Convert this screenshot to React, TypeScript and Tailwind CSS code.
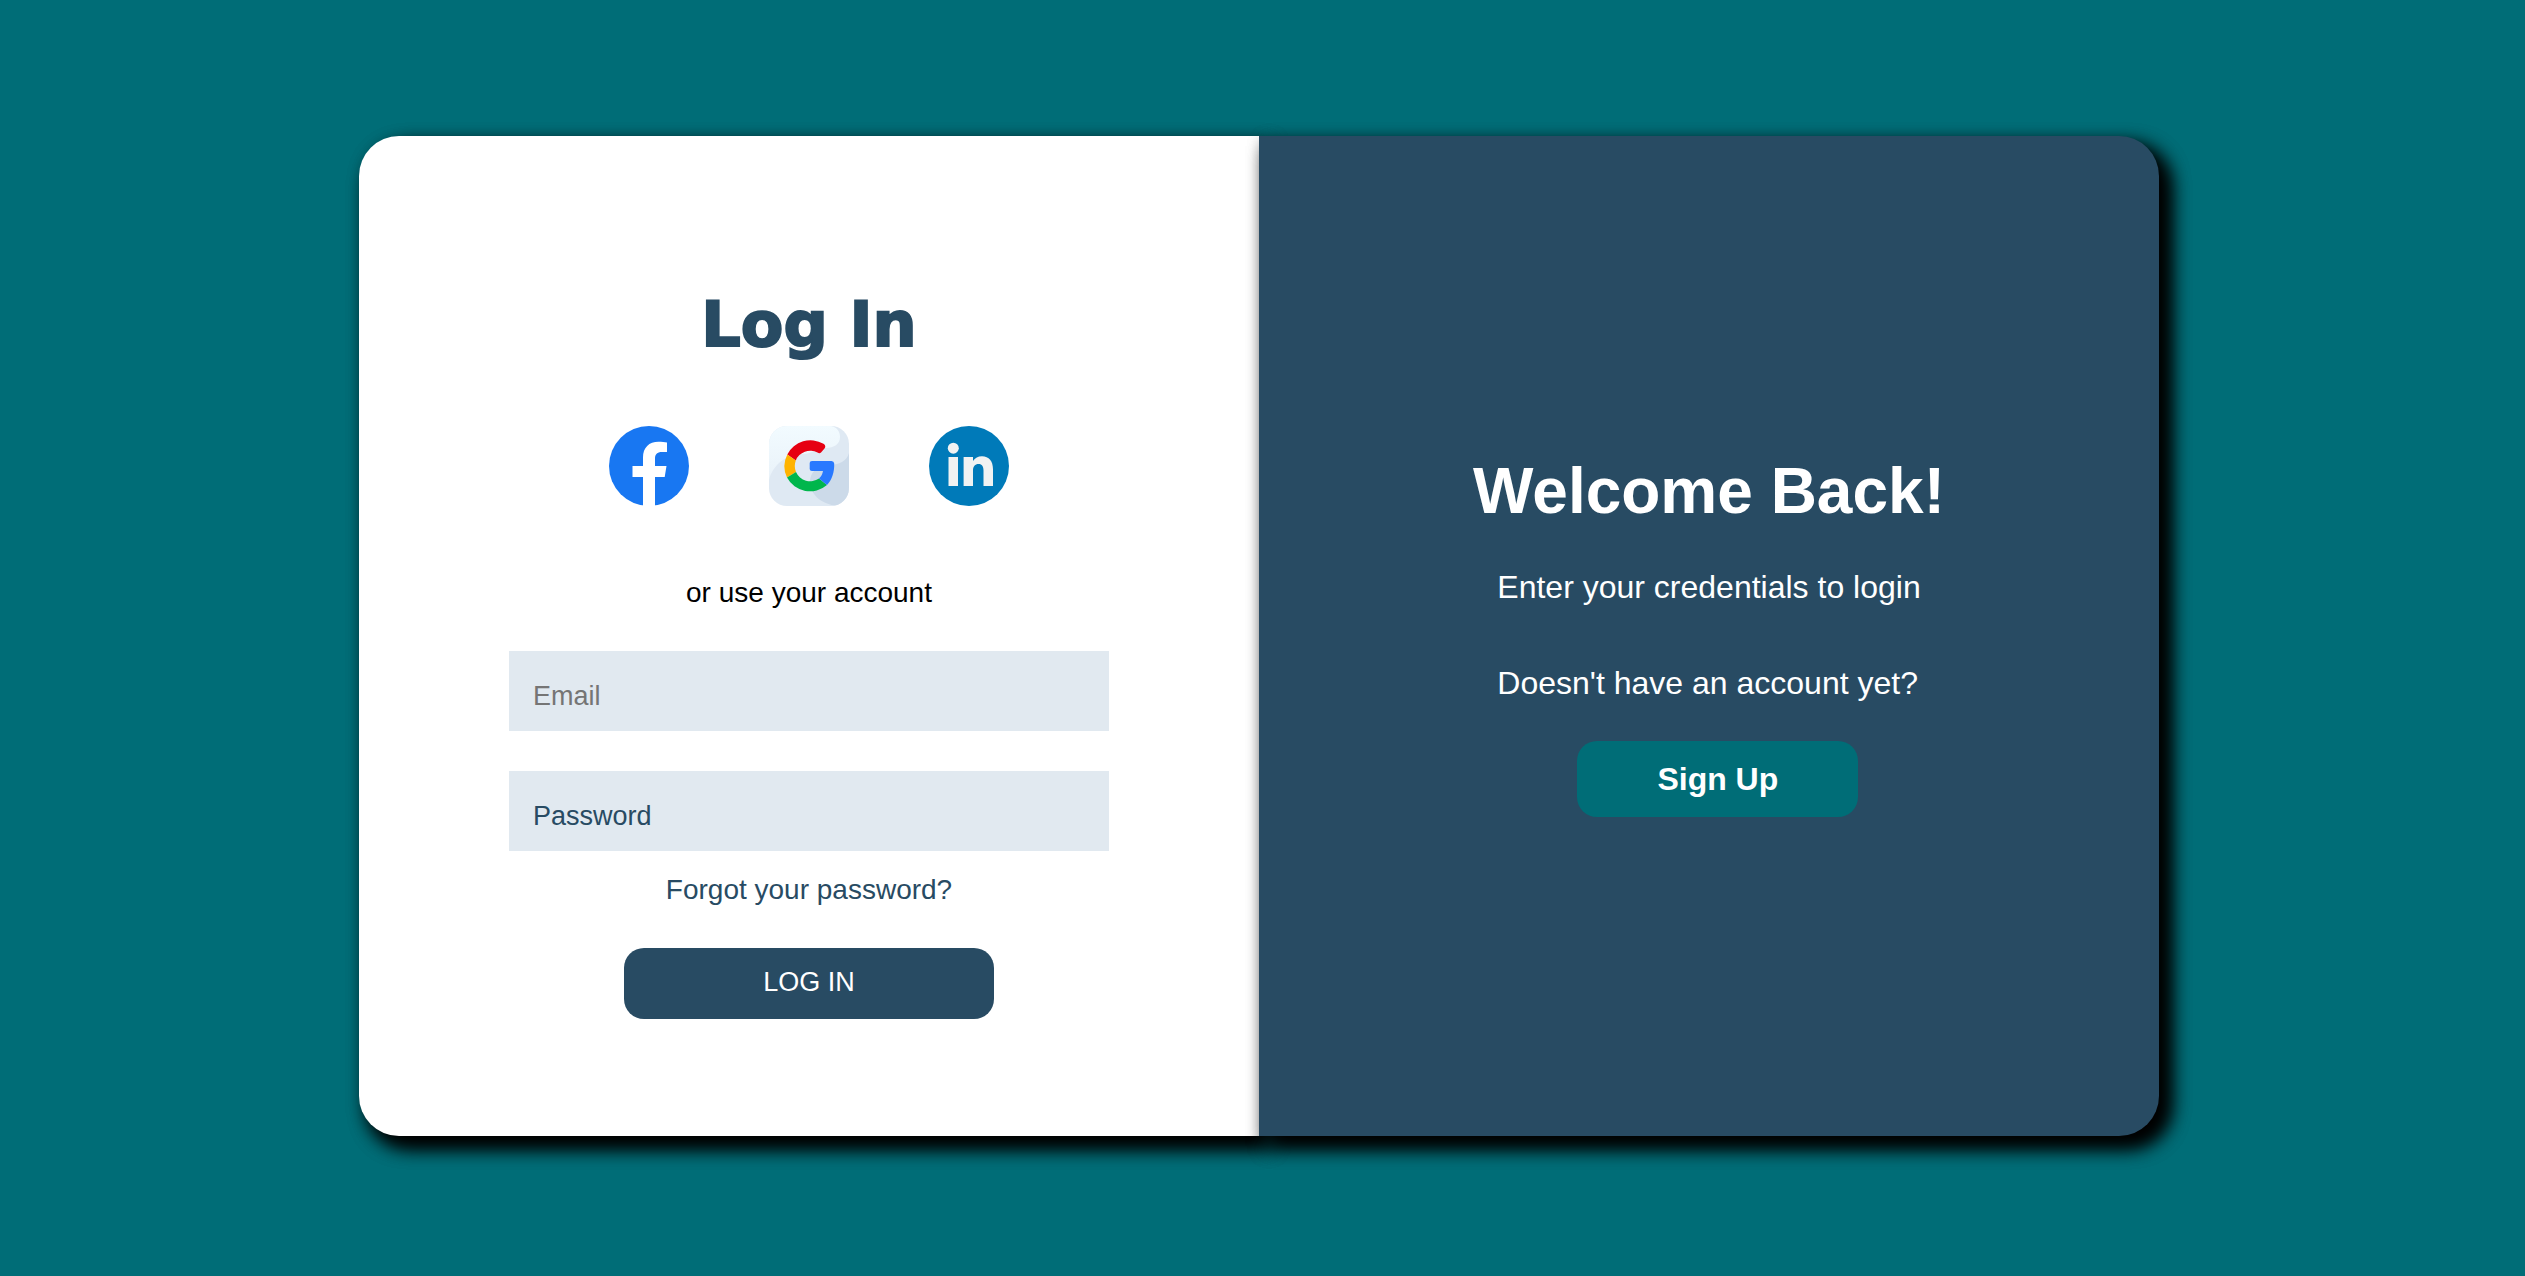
import React from "react";

function FacebookIcon() {
  return (
    <svg viewBox="0 0 80 80" className="size-20" aria-hidden="true">
      <circle cx="40" cy="40" r="40" fill="#1877f2" />
      <path
        d="M34 80V51H23.500V40H34V31.500C34 21.500 40 15.700 49.500 15.700C52.500 15.700 56 16 58 16.400V26H53C48 26 46 28.500 46 32.500V40H57.500L55.700 51H46V80Z"
        fill="#fff"
      />
    </svg>
  );
}

function GoogleIcon() {
  return (
    <svg viewBox="0 0 80 80" className="size-20" aria-hidden="true">
      <defs>
        <clipPath id="tile">
          <rect width="80" height="80" rx="18" />
        </clipPath>
        <linearGradient id="shine" x1="0" y1="0" x2="0" y2="1">
          <stop offset="0" stopColor="#f2fbff" />
          <stop offset="1" stopColor="#e9f2f9" />
        </linearGradient>
      </defs>
      <g clipPath="url(#tile)">
        <rect width="80" height="80" fill="#dfe9f3" />
        <path d="M80 27C78 35 70 39 60 39C48 40 41 46 41 56C41 69 54 80 72 80H80Z" fill="#ccdae9" />
        <path d="M0 0H62C68 1 71 6 71 11C71 18 65 22 57 22C46 22 44 28 34 28C18 28 4 38 0 54Z" fill="url(#shine)" />
      </g>
      <path d="M18.300 28.500A26 26 0 0 1 54.500 17.800Q57.500 20 55.500 22.500L52 26.500Q50.500 28 48.500 26.500A15.500 15.500 0 0 0 26.800 34.500Z" fill="#e60012" />
      <path d="M18.300 28.500A26 26 0 0 0 18 51.500L27 46A15.500 15.500 0 0 1 26.800 34.500Z" fill="#ffb300" />
      <path d="M18 51.500A26 26 0 0 0 58 59L50 52.500A15.500 15.500 0 0 1 27 46Z" fill="#00b64c" />
      <path d="M43 35H62.500Q65 35 65.200 37.500C65.500 46 63 54 58 59L50 52.500C52.500 50.500 53.500 47.500 54 45H43Q40.700 45 40.700 43V37Q40.700 35 43 35Z" fill="#2979ff" />
    </svg>
  );
}

function LinkedinIcon() {
  return (
    <svg viewBox="0 0 80 80" className="size-20" aria-hidden="true">
      <circle cx="40" cy="40" r="40" fill="#007ab9" />
      <g fill="#f1f2f2">
        <circle cx="24.300" cy="22.200" r="5.500" />
        <path d="M19.500 31H29V60H19.500Z" />
        <path d="M34.600 31H44V35C46 32 49 30.200 53 30.200C60 30.200 64 35 64 43.300V60H54.500V44.500C54.500 40.500 53 38 49.600 38C46 38 44 40.500 44 44.500V60H34.600Z" />
      </g>
    </svg>
  );
}

const providers = [
  { name: "Facebook", Icon: FacebookIcon },
  { name: "Google", Icon: GoogleIcon },
  { name: "LinkedIn", Icon: LinkedinIcon },
];

const field =
  "block h-20 w-full bg-[#e1e9f0] px-6 pt-2.5 text-[27px] text-[#284b63] outline-none";

const panel =
  "flex min-h-[1000px] flex-col items-center shadow-[10px_10px_20px_black,10px_10px_20px_black]";

export default function App() {
  return (
    <main className="flex min-h-screen items-center justify-center bg-[#006d77] pr-[7px] pb-1 font-['Liberation_Sans',Arial,sans-serif]">
      <div className="grid w-full max-w-[1800px] grid-cols-2">
        <section className={`${panel} rounded-l-[40px] bg-white pt-36 text-[28px] leading-8 text-[#284b63]`}>
          <h1 className="font-['Arial_Black','DejaVu_Sans',sans-serif] text-[62px] leading-[90px] font-black [-webkit-text-stroke:2px_#284b63]">
            Log In
          </h1>
          <div className="mt-14 flex gap-20">
            {providers.map(({ name, Icon }) => (
              <a key={name} href="#" aria-label={`Log in with ${name}`}>
                <Icon />
              </a>
            ))}
          </div>
          <p className="mt-[71px] text-black">or use your account</p>
          <form className="mt-[42px] flex w-2/3 flex-col items-center" onSubmit={(e) => e.preventDefault()}>
            <div className="flex w-full flex-col gap-10">
              <input type="email" aria-label="Email" placeholder="Email" className={`${field} placeholder:text-[#757575]`} />
              <input type="password" aria-label="Password" placeholder="Password" className={`${field} placeholder:text-[#284b63]`} />
            </div>
            <a href="#" className="mt-[23px]">
              Forgot your password?
            </a>
            <button type="submit" className="mt-[42px] h-[71px] w-[370px] rounded-[20px] bg-[#284b63] pb-1 text-[27px] text-white">
              LOG IN
            </button>
          </form>
        </section>
        <section className={`${panel} rounded-r-[40px] bg-[#284b63] pt-[318px] text-[32px] leading-9 text-white`}>
          <h2 className="text-[64px] leading-[74px] font-bold">Welcome Back!</h2>
          <div className="mt-[41px]">
            <p>Enter your credentials to login</p>
            <p className="mt-[60px]">Doesn't have an account yet?</p>
            <button type="button" className="mt-10 ml-20 h-[76px] w-[281px] rounded-[20px] bg-[#006d77] font-bold">
              Sign Up
            </button>
          </div>
        </section>
      </div>
    </main>
  );
}
